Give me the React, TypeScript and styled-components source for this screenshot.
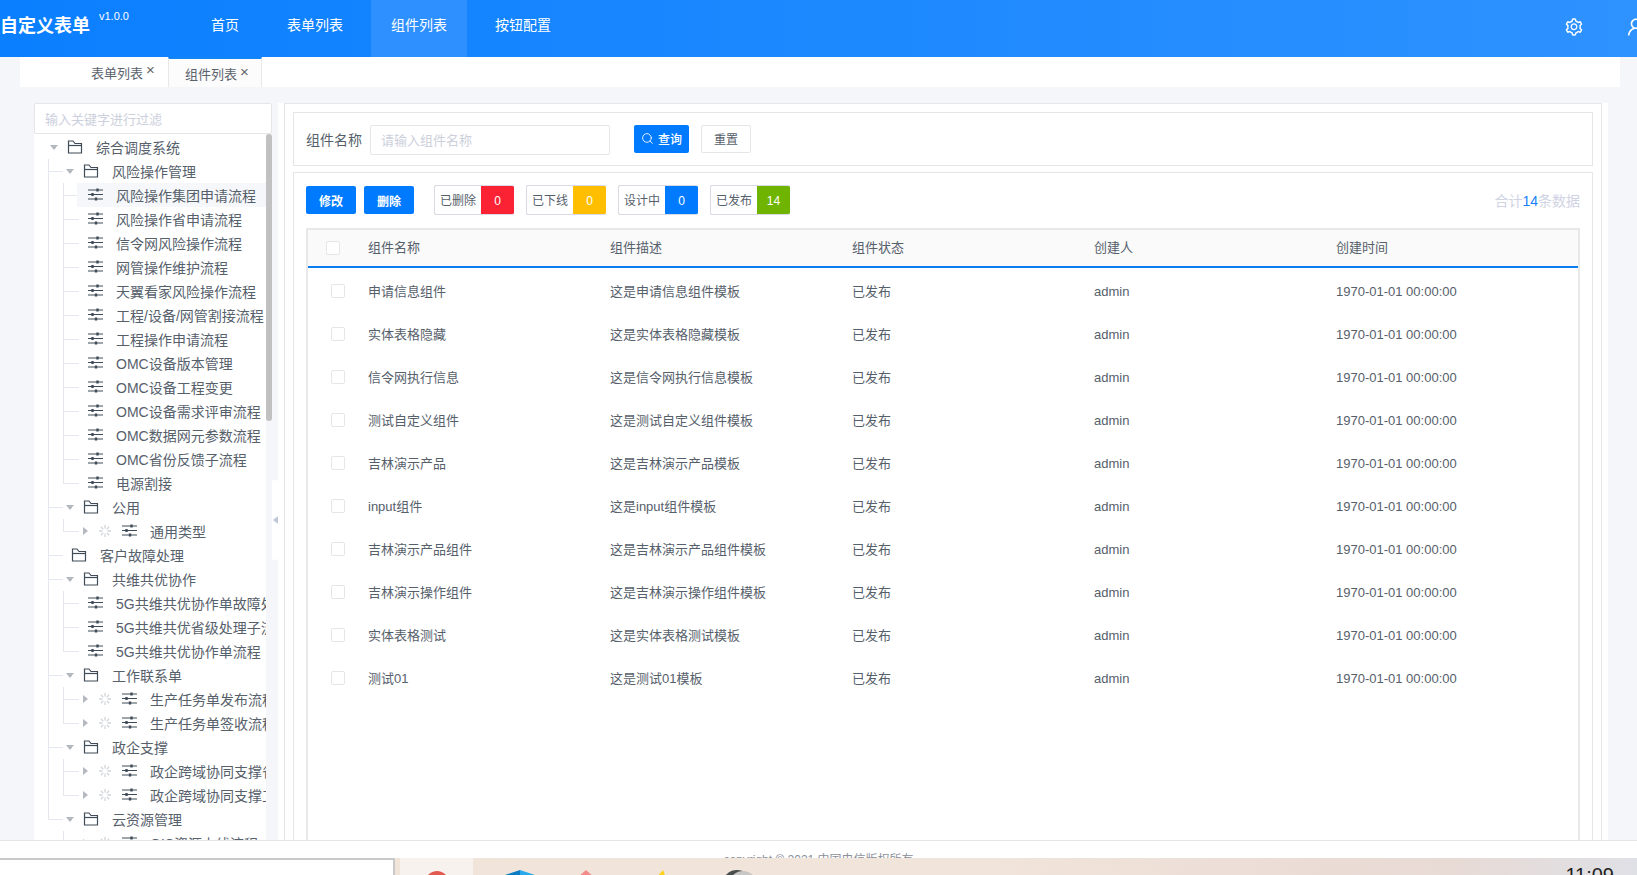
import React from 'react';
import styled, { createGlobalStyle } from 'styled-components';
import { AiOutlineSetting, AiOutlineUser } from 'react-icons/ai';
import { Search } from 'lucide-react';

const FONT = '"Liberation Sans", "Noto Sans CJK SC", sans-serif';

const Global = createGlobalStyle`
  html, body { margin: 0; padding: 0; height: 100%; overflow: hidden; }
  body { font-family: ${FONT}; background: #f5f6fa; color: #56606b; }
  * { box-sizing: border-box; }
  input { font-family: ${FONT}; }
  input::placeholder { color: #ccd0dc; opacity: 1; }
`;

const Page = styled.div`
  width: 1637px; height: 875px; display: flex; flex-direction: column; overflow: hidden;
`;

const Header = styled.header`
  height: 57px; flex: none; display: flex; color: #fff;
  background: linear-gradient(90deg, #0a7fff 0%, #2e92ff 100%);
`;
const Logo = styled.div`
  width: 90px; flex: none; font-size: 18px; font-weight: 700; line-height: 52px; white-space: nowrap;
`;
const Version = styled.div`
  margin: 9px 0 0 9px; width: 30px; flex: none; font-size: 11px; line-height: 14px;
`;
const Nav = styled.nav`
  margin-left: 62px; display: flex; gap: 8px;
`;
const NavItem = styled.a<{ $active?: boolean }>`
  padding: 0 20px; font-size: 14px; line-height: 51px; color: #fff;
  background: ${p => (p.$active ? '#2e90ff' : 'transparent')};
`;
const Actions = styled.div`
  margin-left: auto; margin-right: -10px; display: flex; align-items: center; gap: 41px; padding-bottom: 4px; flex: none;
`;

const TabBar = styled.div`
  height: 30px; flex: none; margin: 0 17px 0 20px; background: #fff; display: flex;
`;
const Tab = styled.div<{ $active?: boolean }>`
  display: flex; align-items: flex-start; font-size: 13px; line-height: 34px; color: #5a626c;
  width: ${p => (p.$active ? 94 : 148)}px;
  padding-left: ${p => (p.$active ? 16 : 71)}px;
  ${p => (p.$active
    ? 'border-top: 2px solid #1484f5; border-left: 1px solid #e8e8e8; border-right: 1px solid #e8e8e8; background: #fcfcfc; line-height: 32px;'
    : '')}
`;
const TabClose = styled.span`
  margin-left: 3px; font-size: 15px; line-height: 26px; color: #666;
`;

const Body = styled.main`
  flex: 1; min-height: 0; overflow: hidden; display: flex; padding: 16px 0 0 34px;
`;
const Side = styled.aside`
  width: 238px; flex: none; display: flex; flex-direction: column;
`;
const FilterInput = styled.input`
  height: 31px; flex: none; width: 100%; border: 1px solid #e6e6e6; border-radius: 2px; outline: none;
  padding: 2px 10px 0; font-size: 13px; background: #fff;
`;
const TreeFrame = styled.div`
  flex: 1; min-height: 0; display: flex; background: #fff;
`;
const TreeList = styled.div`
  flex: 1; min-width: 0; overflow: hidden; padding-top: 1px;
`;
const Track = styled.div`
  width: 6px; flex: none; background: #f5f6fa;
`;
const Thumb = styled.div`
  height: 287px; background: #c1c1c1; border-radius: 3px;
`;
const Collapse = styled.div`
  width: 6px; height: 80px; flex: none; margin-top: 377px; background: #fff;
  border-radius: 0 3px 3px 0; display: flex; align-items: center; justify-content: flex-end;
`;
const CollapseArrow = styled.i`
  border-style: solid; border-width: 4px 5px 4px 0; border-color: transparent #c3c7dc transparent transparent;
`;

const NodeWrap = styled.div<{ $level: number; $last: boolean }>`
  position: relative;
  ${p => (p.$level > 0 ? `
    &::before { content: ''; position: absolute; width: 1px; background: #e4e7ed; top: 0;
      left: ${p.$level === 1 ? 14 : 29}px; height: ${p.$last ? '12px' : '100%'}; }
    &::after { content: ''; position: absolute; height: 1px; background: #e4e7ed; top: 12px;
      left: ${p.$level === 1 ? 14 : 29}px; width: ${p.$level === 1 ? 15 : 16}px; }
  ` : '')}
`;
const Row = styled.div<{ $pad: number; $inset: number; $active?: boolean }>`
  position: relative; z-index: 1; height: 24px; display: flex; align-items: center; white-space: nowrap; overflow: hidden;
  margin-left: ${p => p.$inset}px; padding-left: ${p => p.$pad}px;
  background: ${p => (p.$active ? '#f5f7fa' : 'transparent')};
  font-size: 14px; color: #56606b;
`;
const ArrowDown = styled.i`
  flex: none; width: 0; height: 0; margin-right: 9px;
  border-style: solid; border-width: 5px 4px 0 4px; border-color: #b4b8bf transparent transparent transparent;
`;
const ArrowRight = styled.i`
  flex: none; width: 0; height: 0; margin-right: 10px;
  border-style: solid; border-width: 4px 0 4px 5px; border-color: transparent transparent transparent #b4b8bf;
`;
const FolderSvg = styled.svg`
  flex: none; width: 16px; height: 14px; margin-right: 13px; margin-top: -1px;
`;
const LeafSvg = styled.svg`
  flex: none; width: 15px; height: 13px; margin-right: 13px; margin-top: -2px;
`;
const SpinSvg = styled.svg`
  flex: none; width: 14px; height: 14px; margin-right: 10px;
`;

const Folder = () => (
  <FolderSvg viewBox="0 0 16 14" fill="none" stroke="#3f4c57" strokeWidth="1.2">
    <path d="M1.5 13V1h4.5l2 2.5H14.5V13Z" />
    <path d="M1.5 5.5H14.5" />
  </FolderSvg>
);
const Leaf = () => (
  <LeafSvg viewBox="0 0 15 13" fill="none" stroke="#3f4c57" strokeWidth="1">
    <path d="M0 2H15M0 6.5H15M0 11H15" />
    <path d="M9.5 .5V3.5M4.5 5V8M8 9.5V12.5" strokeWidth="2.4" />
  </LeafSvg>
);
const Spin = () => (
  <SpinSvg viewBox="0 0 14 14" stroke="#d3d6dc" strokeWidth="1.3">
    <path d="M7 1V4.5M7 9.5V13M1 7H4.5M9.5 7H13M2.8 2.8 5.2 5.2M8.8 8.8 11.2 11.2M11.2 2.8 8.8 5.2M5.2 8.8 2.8 11.2" />
  </SpinSvg>
);

type TreeNode = { label: string; children?: TreeNode[]; loading?: boolean; active?: boolean; bare?: boolean };

const tree: TreeNode[] = [
  {
    label: '综合调度系统',
    children: [
      {
        label: '风险操作管理',
        children: [
          { label: '风险操作集团申请流程', active: true },
          { label: '风险操作省申请流程' },
          { label: '信令网风险操作流程' },
          { label: '网管操作维护流程' },
          { label: '天翼看家风险操作流程' },
          { label: '工程/设备/网管割接流程' },
          { label: '工程操作申请流程' },
          { label: 'OMC设备版本管理' },
          { label: 'OMC设备工程变更' },
          { label: 'OMC设备需求评审流程' },
          { label: 'OMC数据网元参数流程' },
          { label: 'OMC省份反馈子流程' },
          { label: '电源割接' },
        ],
      },
      { label: '公用', children: [{ label: '通用类型', loading: true }] },
      { label: '客户故障处理', bare: true },
      {
        label: '共维共优协作',
        children: [
          { label: '5G共维共优协作单故障处理流程' },
          { label: '5G共维共优省级处理子流程' },
          { label: '5G共维共优协作单流程' },
        ],
      },
      {
        label: '工作联系单',
        children: [
          { label: '生产任务单发布流程', loading: true },
          { label: '生产任务单签收流程', loading: true },
        ],
      },
      {
        label: '政企支撑',
        children: [
          { label: '政企跨域协同支撑省流程', loading: true },
          { label: '政企跨域协同支撑工单流程', loading: true },
        ],
      },
      { label: '云资源管理', children: [{ label: 'GIS资源上线流程', loading: true }] },
    ],
  },
];

const Branch = ({ node, level, last }: { node: TreeNode; level: number; last: boolean }) => {
  const isGroup = level < 2;
  const pad = level === 0 ? 16 : level === 1 ? (node.bare ? 37 : 32) : node.loading ? 6 : 11;
  return (
    <NodeWrap $level={level} $last={last}>
      <Row $pad={pad} $inset={level === 2 ? 43 : 0} $active={node.active}>
        {isGroup && !node.bare && <ArrowDown />}
        {node.loading && <ArrowRight />}
        {node.loading && <Spin />}
        {isGroup ? <Folder /> : <Leaf />}
        <span>{node.label}</span>
      </Row>
      {node.children?.map((c, i) => (
        <Branch key={c.label} node={c} level={level + 1} last={i === node.children!.length - 1} />
      ))}
    </NodeWrap>
  );
};

const Pane = styled.section`
  width: 1330px; flex: none; background: #fff; padding: 0 6px; display: flex;
`;
const PaneInner = styled.div`
  flex: 1; border: 1px solid #e6e6e6; border-bottom: none; padding: 8px 8px 0; display: flex; flex-direction: column; gap: 6px;
`;
const SearchCard = styled.div`
  height: 54px; flex: none; border: 1px solid #e6e6e6; padding: 12px 12px 0; display: flex; align-items: flex-start;
`;
const SearchLabel = styled.label`
  width: 56px; font-size: 14px; line-height: 30px; color: #56606b; margin-right: 8px; flex: none;
`;
const SearchInput = styled.input`
  width: 240px; height: 30px; flex: none; border: 1px solid #e6e6e6; border-radius: 2px; padding: 0 10px; font-size: 13px; outline: none;
`;
const QueryButton = styled.button`
  margin-left: 24px; width: 55px; height: 28px; border: none; border-radius: 2px; background: #007bff; color: #fff;
  font-family: ${FONT}; font-size: 12px; font-weight: 500; display: flex; align-items: center; justify-content: center; gap: 4px;
  padding: 0 0 2px;
`;
const ResetButton = styled.button`
  margin-left: 12px; width: 50px; height: 28px; border: 1px solid #e6e6e6; border-radius: 2px; background: #fff; color: #56606b;
  font-family: ${FONT}; font-size: 12px; padding: 0 0 2px;
`;
const ListCard = styled.div`
  flex: 1; min-height: 0; border: 1px solid #e6e6e6; border-bottom: none; padding: 12px 12px 0; display: flex; flex-direction: column;
`;
const Toolbar = styled.div`
  height: 30px; flex: none; display: flex; align-items: center; margin-bottom: 13px;
`;
const ActionButton = styled.button`
  width: 50px; height: 28px; margin-right: 8px; border: none; border-radius: 2px; background: #007bff; color: #fff;
  font-family: ${FONT}; font-size: 12px; font-weight: 700; padding: 0;
`;
const Stats = styled.div`
  margin-left: 12px; display: flex; gap: 12px;
`;
const Stat = styled.div`
  width: 80px; height: 30px; display: flex; border: 1px solid #d9dae6; border-right: none; border-radius: 2px; overflow: hidden;
`;
const StatLabel = styled.span`
  flex: 1; font-size: 12px; line-height: 30px; text-align: center; color: #56606b;
`;
const StatValue = styled.span<{ $color: string }>`
  width: 33px; margin: -1px 0; flex: none; background: ${p => p.$color}; color: #fff; font-size: 12px; line-height: 32px; text-align: center;
`;
const Total = styled.div`
  margin-left: auto; font-size: 14px; color: #cfd3e3;
`;
const TotalNum = styled.span`
  color: #1880ff;
`;

const Table = styled.div`
  flex: 1; min-height: 0; border: 2px solid #e8e8e8; border-bottom: none; display: flex; flex-direction: column;
`;
const HeadRow = styled.div`
  height: 38px; flex: none; display: grid; grid-template-columns: 60px repeat(4, 242px) 1fr; align-items: center;
  background: #fafafa; border-bottom: 2px solid #0a7cf0; font-size: 13px; color: #56606b;
`;
const HeadCell = styled.span`
  margin-top: -4px;
`;
const TableBody = styled.div`
  padding-top: 1px;
`;
const DataRow = styled.div`
  height: 43px; display: grid; grid-template-columns: 60px repeat(4, 242px) 1fr; align-items: center; font-size: 13px; color: #56606b;
`;
const LatinCell = styled.span`
  padding-top: 2px;
`;
const Check = styled.span<{ $head?: boolean }>`
  display: block; width: 14px; height: 14px; border: 1px solid #e6e6e6; border-radius: 2px; background: #fff;
  margin-left: ${p => (p.$head ? 18 : 23)}px;
`;

const Footer = styled.footer`
  height: 18px; flex: none; background: #fff; border-top: 1px solid #e6e6e6; overflow: hidden; text-align: center;
  font-size: 12px; color: #8a8f99; padding-top: 12px; line-height: 15px;
`;
const Taskbar = styled.div`
  height: 17px; flex: none; display: flex; overflow: hidden;
  background: linear-gradient(90deg, #f1e5da 0%, #f1e4da 60%, #e8dad4 88%, #dfe0e6 100%);
`;
const WindowEdge = styled.div`
  width: 395px; flex: none; background: #fff; border-top: 2px solid #c9c9c9; border-right: 2px solid #c9c9c9;
`;
const ActiveApp = styled.div`
  margin-left: 5px; width: 73px; flex: none; background: #f7f2ee; display: flex; justify-content: center;
`;
const TaskIcons = styled.svg`
  width: 300px; height: 17px; flex: none;
`;
const RedDot = styled.i`
  width: 24px; height: 24px; margin-top: 13px; border-radius: 50%; background: #e25a50; display: block;
`;
const Clock = styled.div`
  margin-left: auto; margin-right: 23px; font-size: 20px; line-height: 22px; color: #222; padding-top: 6px;
`;

const rows: [string, string][] = [
  ['申请信息组件', '这是申请信息组件模板'],
  ['实体表格隐藏', '这是实体表格隐藏模板'],
  ['信令网执行信息', '这是信令网执行信息模板'],
  ['测试自定义组件', '这是测试自定义组件模板'],
  ['吉林演示产品', '这是吉林演示产品模板'],
  ['input组件', '这是input组件模板'],
  ['吉林演示产品组件', '这是吉林演示产品组件模板'],
  ['吉林演示操作组件', '这是吉林演示操作组件模板'],
  ['实体表格测试', '这是实体表格测试模板'],
  ['测试01', '这是测试01模板'],
];

const stats = [
  { label: '已删除', value: 0, color: '#fb2233' },
  { label: '已下线', value: 0, color: '#ffbf00' },
  { label: '设计中', value: 0, color: '#007bff' },
  { label: '已发布', value: 14, color: '#6fb400' },
];

export default function App() {
  return (
    <Page>
      <Global />
      <Header>
        <Logo>自定义表单</Logo>
        <Version>v1.0.0</Version>
        <Nav>
          <NavItem>首页</NavItem>
          <NavItem>表单列表</NavItem>
          <NavItem $active>组件列表</NavItem>
          <NavItem>按钮配置</NavItem>
        </Nav>
        <Actions>
          <AiOutlineSetting size={20} color="#fff" />
          <AiOutlineUser size={22} color="#fff" />
        </Actions>
      </Header>
      <TabBar>
        <Tab>表单列表<TabClose>×</TabClose></Tab>
        <Tab $active>组件列表<TabClose>×</TabClose></Tab>
      </TabBar>
      <Body>
        <Side>
          <FilterInput placeholder="输入关键字进行过滤" />
          <TreeFrame>
            <TreeList>
              {tree.map((n, i) => (
                <Branch key={n.label} node={n} level={0} last={i === tree.length - 1} />
              ))}
            </TreeList>
            <Track><Thumb /></Track>
          </TreeFrame>
        </Side>
        <Collapse><CollapseArrow /></Collapse>
        <Pane>
          <PaneInner>
            <SearchCard>
              <SearchLabel>组件名称</SearchLabel>
              <SearchInput placeholder="请输入组件名称" />
              <QueryButton><Search size={13} strokeWidth={1.6} />查询</QueryButton>
              <ResetButton>重置</ResetButton>
            </SearchCard>
            <ListCard>
              <Toolbar>
                <ActionButton>修改</ActionButton>
                <ActionButton>删除</ActionButton>
                <Stats>
                  {stats.map(s => (
                    <Stat key={s.label}>
                      <StatLabel>{s.label}</StatLabel>
                      <StatValue $color={s.color}>{s.value}</StatValue>
                    </Stat>
                  ))}
                </Stats>
                <Total>合计<TotalNum>14</TotalNum>条数据</Total>
              </Toolbar>
              <Table>
                <HeadRow>
                  <Check $head />
                  <HeadCell>组件名称</HeadCell>
                  <HeadCell>组件描述</HeadCell>
                  <HeadCell>组件状态</HeadCell>
                  <HeadCell>创建人</HeadCell>
                  <HeadCell>创建时间</HeadCell>
                </HeadRow>
                <TableBody>
                  {rows.map(([name, desc]) => (
                    <DataRow key={name}>
                      <Check />
                      <span>{name}</span>
                      <span>{desc}</span>
                      <span>已发布</span>
                      <LatinCell>admin</LatinCell>
                      <LatinCell>1970-01-01 00:00:00</LatinCell>
                    </DataRow>
                  ))}
                </TableBody>
              </Table>
            </ListCard>
          </PaneInner>
        </Pane>
      </Body>
      <Footer>copyright © 2021 中国电信版权所有</Footer>
      <Taskbar>
        <WindowEdge />
        <ActiveApp><RedDot /></ActiveApp>
        <TaskIcons viewBox="0 0 300 17">
          <path d="M47 12 47 17 32 17Z" fill="#0c7cc4" />
          <path d="M47 12 62 17H47Z" fill="#2aa9ec" />
          <path d="M113 12 122 20H104Z" fill="#f58a8a" />
          <path d="M190 12 193 20H183Z" fill="#ffd21a" />
          <circle cx="264" cy="27" r="15" fill="#4a4f4d" />
          <circle cx="270" cy="27" r="14" fill="#c9c6c6" />
        </TaskIcons>
        <Clock>11:09</Clock>
      </Taskbar>
    </Page>
  );
}
